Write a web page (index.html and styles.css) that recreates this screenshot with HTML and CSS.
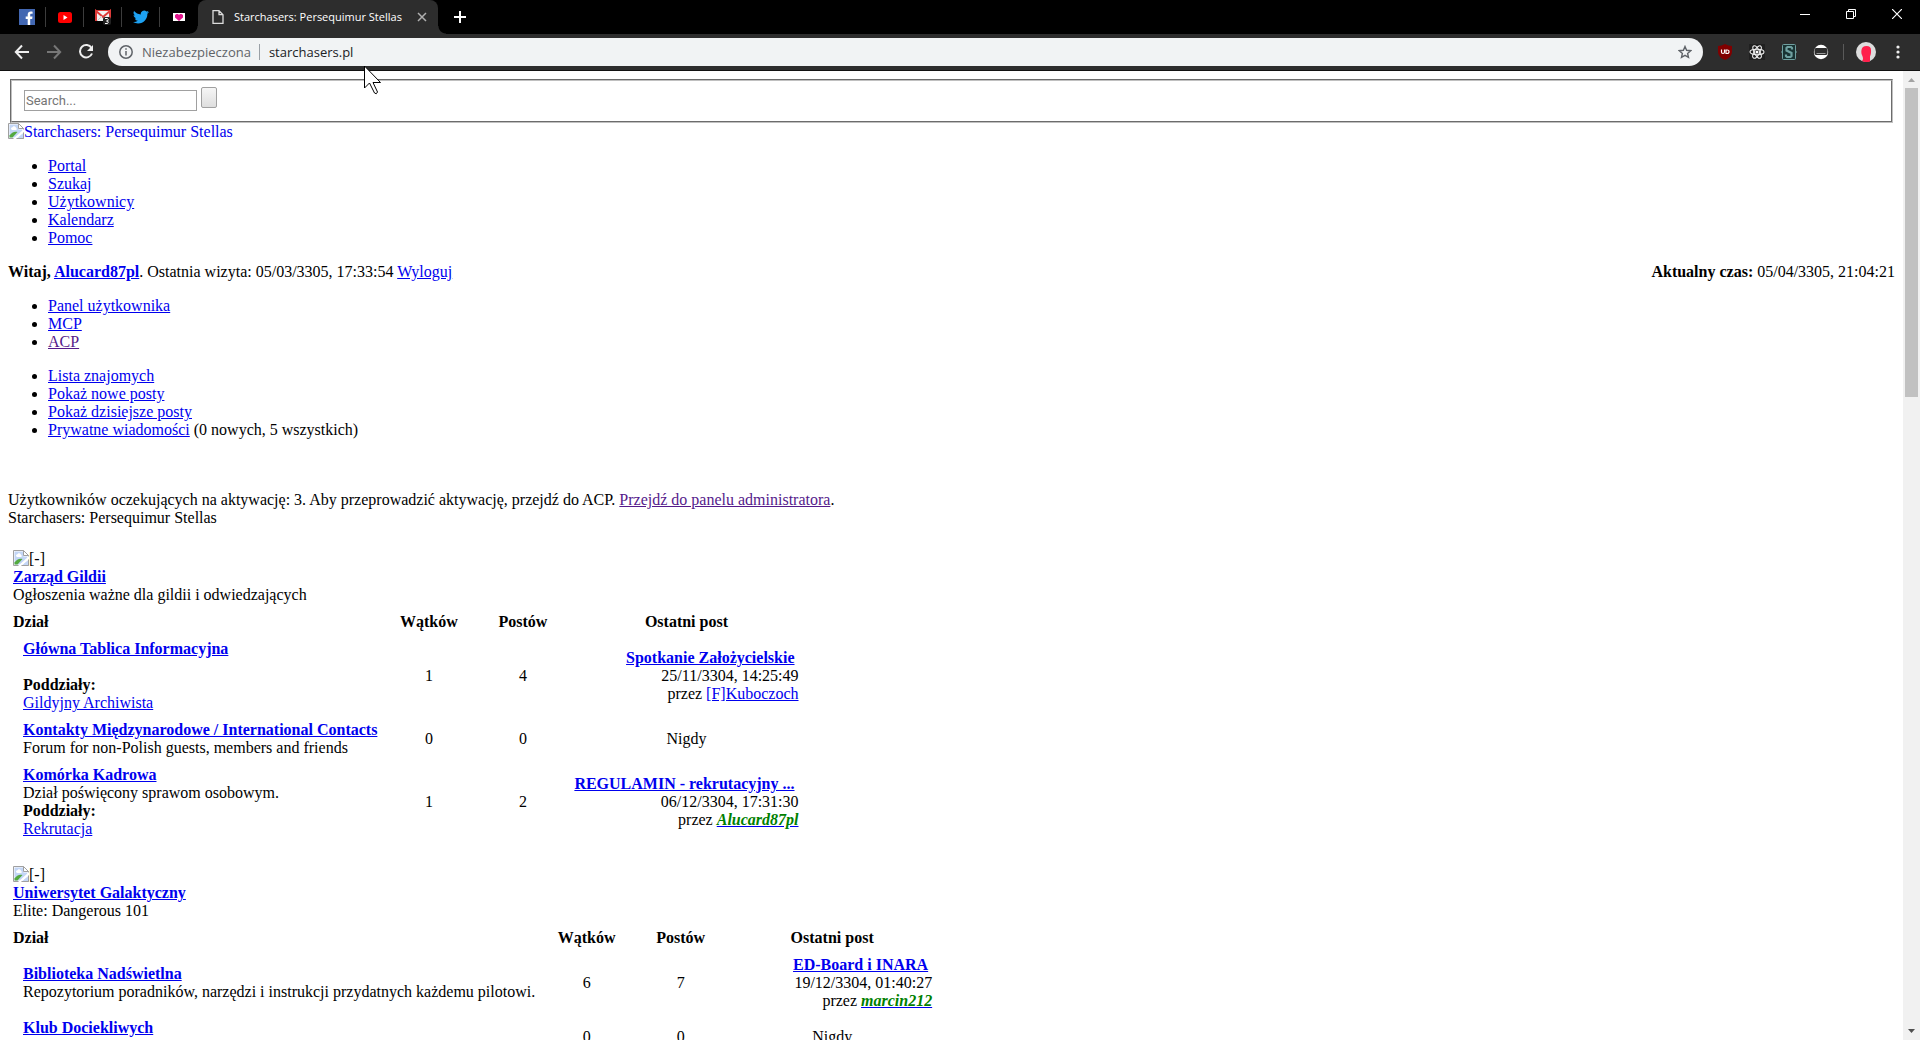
FILE: index.html
```html
<!DOCTYPE html>
<html lang="pl">
<head>
<meta charset="utf-8">
<title>Starchasers: Persequimur Stellas</title>
<link rel="stylesheet" href="styles.css">
</head>
<body>
<svg class="defs" aria-hidden="true">
  <symbol id="broken" viewBox="0 0 16 16">
    <path d="M0.500 0.500h10l5 5v10h-15z" fill="#fff" stroke="#a0a0a0"/>
    <path d="M1.500 1.500h9v5h4v8h-13z" fill="#c3d6f6"/>
    <path d="M3 6c0-2 2-1.500 2-2.500 2-1 3 .5 3 1.500 1 0 1 2 0 2H4z" fill="#fff"/>
    <path d="M1.500 14.500v-2c2-3 5-4.500 8-3.500l-5 5.500z" fill="#53a93f"/>
    <path d="M10.500 .5v5h5z" fill="#fff" stroke="#a0a0a0"/>
    <path d="M5 16 16 6v3.500L8.500 16z" fill="#fff"/>
    <path d="M9 15.500h6.500V10z" fill="#c3d6f6"/><path d="M8.500 15.500h7v-6" fill="none" stroke="#a0a0a0"/>
  </symbol>
</svg>

<header class="tabs">
  <div class="pin"><svg width="16" height="16" viewBox="0 0 16 16"><path fill="#4267b2" d="M0 0h16v16H0z"/><path fill="#fff" d="M8.700 16V10H6.700V7.500h2V5.800c0-2.100 1.300-3.200 3.100-3.200.9 0 1.600.1 1.800.1v2.100h-1.200c-1 0-1.200.5-1.200 1.200v1.500h2.300l-.3 2.500h-2v6z"/></svg></div>
  <div class="pin"><svg width="16" height="16" viewBox="0 0 16 16"><rect x="1" y="3" width="14" height="11" rx="2.500" fill="red"/><path fill="#fff" d="m6.500 6 4 2.500-4 2.500z"/></svg></div>
  <div class="pin"><svg width="16" height="16" viewBox="0 0 16 16"><path fill="#f2f2f2" d="M0 1h16v11H0z"/><path d="M1 12V2l7 6 7-6v10" fill="none" stroke="#dd3b39" stroke-width="2"/><path d="M1 1.500h14" stroke="#dd3b39"/><path d="m2 12 5-5" stroke="#ccc"/><rect x="8" y="8" width="8" height="8" rx="2" fill="#222"/><path d="M10 9.500h2.500q1.500 1.200 0 2.500H11.500h1q1.500 1.200 0 2.500H10" fill="none" stroke="#fff"/></svg></div>
  <div class="pin"><svg width="16" height="16" viewBox="0 0 24 24"><path fill="#1da1f2" d="M23.950 4.570a10 10 0 0 1-2.820.77 4.960 4.960 0 0 0 2.160-2.720c-.95.55-2 .95-3.130 1.180a4.920 4.920 0 0 0-8.380 4.480C7.690 8.100 4.070 6.130 1.640 3.160a4.920 4.920 0 0 0 1.520 6.570 4.900 4.900 0 0 1-2.230-.61v.06c0 2.380 1.700 4.370 3.950 4.830a5 5 0 0 1-2.210.08 4.940 4.940 0 0 0 4.600 3.420A9.870 9.870 0 0 1 0 19.540a13.990 13.990 0 0 0 7.550 2.210c9.050 0 14-7.500 14-13.980 0-.21 0-.42-.02-.63a9.940 9.940 0 0 0 2.420-2.570z"/></svg></div>
  <div class="pin pin-last"><svg width="12" height="8" viewBox="0 0 12 8"><path fill="#fff" d="M0 0h12v8H0z"/><path fill="#e0148c" d="M6 8 2 4.500V2L3.500 1H5l1 1 1-1h1.500L10 2v2.500z"/></svg></div>
  <div class="tab">
    <svg width="12" height="14" viewBox="0 0 12 14"><path d="M1 .7h6l4 4v8.600H1zM7 .7v4h4" fill="none" stroke="#ddd" stroke-width="1.300"/></svg>
    <span class="tab-title">Starchasers: Persequimur Stellas</span>
    <button class="icon" aria-label="Zamknij kartę"><svg width="10" height="10" viewBox="0 0 10 10"><path d="m1 1 8 8M9 1 1 9" stroke="#b0b0b0" stroke-width="1.500"/></svg></button>
  </div>
  <button class="icon new-tab" aria-label="Nowa karta"><svg width="12" height="12" viewBox="0 0 12 12"><path d="M6 0v12M0 6h12" stroke="#fff" stroke-width="2"/></svg></button>
  <div class="window-buttons">
    <button class="icon" aria-label="Minimalizuj"><svg width="10" height="10" viewBox="0 0 10 10"><path d="M0 5.500h10" stroke="#fff"/></svg></button>
    <button class="icon" aria-label="Przywróć"><svg width="10" height="10" viewBox="0 0 10 10"><path d="M.5 2.500h7v7h-7zM2.500 2V.5h7v7H8" fill="none" stroke="#fff"/></svg></button>
    <button class="icon" aria-label="Zamknij"><svg width="10" height="10" viewBox="0 0 10 10"><path d="m0 0 10 10M10 0 0 10" stroke="#fff" stroke-width="1.200"/></svg></button>
  </div>
</header>

<nav class="toolbar">
  <div class="nav-buttons">
    <button class="icon" aria-label="Wstecz"><svg width="16" height="16" viewBox="0 0 16 16"><path d="M15 8H2M8 1.500 1.800 8 8 14.500" fill="none" stroke="#eee" stroke-width="2"/></svg></button>
    <button class="icon" aria-label="Dalej"><svg width="16" height="16" viewBox="0 0 16 16"><path d="M1 8h13M8 1.500 14.200 8 8 14.500" fill="none" stroke="#777" stroke-width="2"/></svg></button>
    <button class="icon" aria-label="Odśwież"><svg width="16" height="16" viewBox="0 0 16 16"><path d="M13.500 4A6.200 6.200 0 1 0 14 9.500" fill="none" stroke="#eee" stroke-width="2"/><path d="M15 1v6H9z" fill="#eee"/></svg></button>
  </div>
  <div class="omnibox">
    <svg width="14" height="14" viewBox="0 0 14 14"><circle cx="7" cy="7" r="6.200" fill="none" stroke="#5f6368" stroke-width="1.500"/><path d="M7 6v4.500M7 3.300v1.500" stroke="#5f6368" stroke-width="1.500"/></svg>
    <span class="security">Niezabezpieczona</span>
    <input class="url" aria-label="Adres" value="starchasers.pl">
    <button class="icon" aria-label="Zakładka"><svg width="14" height="14" viewBox="0 0 14 14"><path d="m7 1.500 1.600 3.800 4.100.4-3.100 2.700.9 4L7 10.300l-3.500 2.100.9-4L1.300 5.700l4.100-.4z" fill="none" stroke="#5f6368" stroke-width="1.400"/></svg></button>
  </div>
  <div class="extensions">
    <button class="icon" aria-label="Blokada"><svg width="14" height="16" viewBox="0 0 14 16"><path d="M7 0q3.500 2 7 2v6q0 5-7 8-7-3-7-8V2q3.500 0 7-2z" fill="#800000"/><path d="M3.500 5.500v2.500q0 1.500 1.500 1.500t1.500-1.500V5.500M8 6v3.500h1q2 0 2-1.800T9 6z" fill="none" stroke="#fff" stroke-width="1.200"/></svg></button>
    <button class="icon" aria-label="React"><svg width="16" height="16" viewBox="0 0 16 16"><path fill="#202020" d="M0 0h16v16H0z"/><g fill="none" stroke="#eee" stroke-width="1.100"><ellipse cx="8" cy="8" rx="7" ry="2.700"/><ellipse cx="8" cy="8" rx="7" ry="2.700" transform="rotate(60 8 8)"/><ellipse cx="8" cy="8" rx="7" ry="2.700" transform="rotate(120 8 8)"/></g><circle cx="8" cy="8" r="1.500" fill="#fff"/></svg></button>
    <button class="icon" aria-label="Stylus"><svg width="16" height="16" viewBox="0 0 16 16"><rect x="1.500" y=".5" width="13" height="15" rx="1" fill="#193333" stroke="#6fa0a0"/><path d="M0 8h2M14 8h2" stroke="#6fa0a0"/><path d="M11 5.500V4L10 3H6.500l-1 1v2.500L10.500 9v3l-1 1H6l-1-1v-1.500" fill="none" stroke="#6fa0a0" stroke-width="2.200"/></svg></button>
    <button class="icon" aria-label="Rozszerzenie"><svg width="16" height="16" viewBox="0 0 16 16"><circle cx="8" cy="8" r="7.200" fill="#fff"/><path d="M3 4h10q1.500 0 1.500 2v3q0 2-1.500 2H3q-1.500 0-1.500-2V6Q1.500 4 3 4z" fill="#2d2d2d"/><path d="M3.500 9.500h9" stroke="#999"/></svg></button>
    <span class="divider"></span>
    <button class="icon" aria-label="Profil"><svg width="20" height="20" viewBox="0 0 20 20"><circle cx="10" cy="10" r="10" fill="#ddd"/><path d="M6 19q2-2 0-6-1-2-.5-5 .5-4 5-4T15 8q.3 4-1 6.500v5Q10 21 6 19z" fill="#ff1f4b"/></svg></button>
    <button class="icon" aria-label="Menu"><svg width="4" height="14" viewBox="0 0 4 14"><g fill="#eee"><circle cx="2" cy="2" r="1.600"/><circle cx="2" cy="7" r="1.600"/><circle cx="2" cy="12" r="1.600"/></g></svg></button>
  </div>
</nav>

<div class="viewport">
<main class="page">
  <form class="search-form">
    <fieldset class="search">
      <input class="search-text" type="text" placeholder="Search..." aria-label="Search">
      <button class="search-go" type="button" aria-label="Szukaj"></button>
    </fieldset>
  </form>
  <a class="logo" href="#"><svg class="broken"><use href="#broken"/></svg>Starchasers: Persequimur Stellas</a>
  <ul>
    <li><a href="#">Portal</a></li>
    <li><a href="#">Szukaj</a></li>
    <li><a href="#">Użytkownicy</a></li>
    <li><a href="#">Kalendarz</a></li>
    <li><a href="#">Pomoc</a></li>
  </ul>
  <div class="welcome">
    <span><strong>Witaj, <a href="#">Alucard87pl</a></strong>. Ostatnia wizyta: 05/03/3305, 17:33:54 <a href="#">Wyloguj</a></span>
    <span><strong>Aktualny czas:</strong> 05/04/3305, 21:04:21</span>
  </div>
  <ul>
    <li><a href="#">Panel użytkownika</a></li>
    <li><a href="#">MCP</a></li>
    <li><a class="visited" href="#">ACP</a></li>
  </ul>
  <ul>
    <li><a href="#">Lista znajomych</a></li>
    <li><a href="#">Pokaż nowe posty</a></li>
    <li><a href="#">Pokaż dzisiejsze posty</a></li>
    <li><a href="#">Prywatne wiadomości</a> (0 nowych, 5 wszystkich)</li>
  </ul>
  <div class="notice">Użytkowników oczekujących na aktywację: 3. Aby przeprowadzić aktywację, przejdź do ACP. <a class="visited" href="#">Przejdź do panelu administratora</a>.</div>
  <div>Starchasers: Persequimur Stellas</div>

  <table class="forum">
    <thead>
      <tr><td colspan="5">
        <div class="toggle"><svg class="broken"><use href="#broken"/></svg>[-]</div>
        <div><strong><a href="#">Zarząd Gildii</a></strong></div>
        <div>Ogłoszenia ważne dla gildii i odwiedzających</div>
      </td></tr>
      <tr><th class="name" colspan="2">Dział</th><th class="count">Wątków</th><th class="count">Postów</th><th class="last">Ostatni post</th></tr>
    </thead>
    <tbody>
      <tr>
        <td class="status"></td>
        <td><strong><a href="#">Główna Tablica Informacyjna</a></strong><br><br><strong>Poddziały:</strong><br><a href="#">Gildyjny Archiwista</a></td>
        <td class="num">1</td><td class="num">4</td>
        <td class="post"><strong><a href="#">Spotkanie Założycielskie</a></strong>&nbsp;<br>25/11/3304, 14:25:49<br>przez <a href="#">[F]Kuboczoch</a></td>
      </tr>
      <tr>
        <td class="status"></td>
        <td><strong><a href="#">Kontakty Międzynarodowe / International Contacts</a></strong><br>Forum for non-Polish guests, members and friends</td>
        <td class="num">0</td><td class="num">0</td><td class="num">Nigdy</td>
      </tr>
      <tr>
        <td class="status"></td>
        <td><strong><a href="#">Komórka Kadrowa</a></strong><br>Dział poświęcony sprawom osobowym.<br><strong>Poddziały:</strong><br><a href="#">Rekrutacja</a></td>
        <td class="num">1</td><td class="num">2</td>
        <td class="post"><strong><a href="#">REGULAMIN - rekrutacyjny ...</a></strong>&nbsp;<br>06/12/3304, 17:31:30<br>przez <a href="#"><span class="staff">Alucard87pl</span></a></td>
      </tr>
    </tbody>
  </table>

  <table class="forum">
    <thead>
      <tr><td colspan="5">
        <div class="toggle"><svg class="broken"><use href="#broken"/></svg>[-]</div>
        <div><strong><a href="#">Uniwersytet Galaktyczny</a></strong></div>
        <div>Elite: Dangerous 101</div>
      </td></tr>
      <tr><th class="name" colspan="2">Dział</th><th class="count">Wątków</th><th class="count">Postów</th><th class="last">Ostatni post</th></tr>
    </thead>
    <tbody>
      <tr>
        <td class="status"></td>
        <td><strong><a href="#">Biblioteka Nadświetlna</a></strong><br>Repozytorium poradników, narzędzi i instrukcji przydatnych każdemu pilotowi.</td>
        <td class="num">6</td><td class="num">7</td>
        <td class="post"><strong><a href="#">ED-Board i INARA</a></strong>&nbsp;<br>19/12/3304, 01:40:27<br>przez <a href="#"><span class="staff">marcin212</span></a></td>
      </tr>
      <tr>
        <td class="status"></td>
        <td><strong><a href="#">Klub Dociekliwych</a></strong><br>&nbsp;</td>
        <td class="num">0</td><td class="num">0</td><td class="num">Nigdy</td>
      </tr>
    </tbody>
  </table>
</main>
<div class="scrollbar" aria-hidden="true">
  <svg width="7" height="4" viewBox="0 0 7 4"><path d="M0 4 3.500 0 7 4z" fill="#a3a3a3"/></svg>
  <div class="track"><div class="thumb"></div></div>
  <svg width="7" height="4" viewBox="0 0 7 4"><path d="M0 0h7L3.500 4z" fill="#505050"/></svg>
</div>
</div>

<svg class="cursor" width="20" height="32" viewBox="0 0 20 32" aria-hidden="true"><path d="M1.500 1v22l5-5 5 10q2 2 3-1L10 17.500h7.500z" fill="#fff" stroke="#000"/></svg>
</body>
</html>
```
FILE: styles.css
```css
* { box-sizing: border-box; }

body {
  margin: 0;
  height: 100vh;
  display: flex;
  flex-direction: column;
  overflow: hidden;
  background: #fff;
  color: #000;
  font: 16px/18px "Liberation Serif", "Times New Roman", serif;
}

.defs { position: absolute; width: 0; height: 0; }
svg { display: block; flex: none; }

.icon {
  display: flex;
  align-items: center;
  justify-content: center;
  flex: none;
  padding: 0;
  border: 0;
  background: none;
}

/* Tab strip */
.tabs {
  display: flex;
  flex: none;
  height: 34px;
  padding-left: 8px;
  background: #000;
  font: 11px/16px "Open Sans", "Noto Sans", sans-serif;
}
.pin {
  display: flex;
  align-items: center;
  justify-content: center;
  width: 38px;
  background: linear-gradient(#3c3c3c, #3c3c3c) right center / 1px 20px no-repeat;
}
/* Curved feet on both sides of the active tab */
.pin-last { background: radial-gradient(circle at 0 0, #000 7px, #2d2d2d 8px) right bottom / 8px 8px no-repeat; }
.new-tab { background: radial-gradient(circle at 8px 0, #000 7px, #2d2d2d 8px) left bottom / 8px 8px no-repeat; }
.tab {
  display: flex;
  align-items: center;
  width: 240px;
  padding: 0 11px 0 14px;
  border-radius: 8px 8px 0 0;
  background: #2d2d2d;
  color: #fff;
}
.tab-title { flex: 1; margin-left: 10px; white-space: nowrap; }
.new-tab { width: 44px; }
.window-buttons { display: flex; height: 28px; margin-left: auto; }
.window-buttons .icon { width: 46px; }

/* Toolbar */
.toolbar {
  display: flex;
  align-items: center;
  flex: none;
  height: 37px;
  border-bottom: 1px solid #111;
  background: #2d2d2d;
  font: 13px/20px "Open Sans", "Noto Sans", sans-serif;
}
.nav-buttons { display: flex; padding: 0 6px; }
.nav-buttons .icon { width: 32px; height: 28px; }
.omnibox {
  display: flex;
  align-items: center;
  flex: 1;
  height: 28px;
  padding: 0 11px;
  border-radius: 14px;
  background: #f1f3f4;
}
.security {
  margin: 0 9px;
  padding-right: 8px;
  border-right: 1px solid #9aa0a6;
  color: #5f6368;
  line-height: 16px;
}
.url {
  flex: 1;
  min-width: 0;
  padding: 0;
  border: 0;
  background: none;
  color: #202124;
  font: inherit;
}
.extensions { display: flex; align-items: center; padding: 0 6px; }
.extensions .icon { width: 32px; height: 28px; }
.divider { width: 1px; height: 16px; margin: 0 6px; background: #5a5a5a; }

/* Page area */
.viewport { display: flex; flex: 1; min-height: 0; }
.page { flex: 1; min-width: 0; padding: 8px; overflow: hidden; }

a { color: #0000ee; text-decoration: underline; }
a.visited { color: #551a8b; }
ul { margin: 16px 0; padding-left: 40px; }

.search-form { margin: 0; }
.search {
  display: flex;
  height: 44px;
  margin: 0 2px;
  padding: 6px 12px 10px;
  gap: 4px;
  border: 2px groove #c0c0c0;
}
.search-text {
  align-self: flex-end;
  width: 173px;
  height: 21px;
  padding: 1px;
  border: 1px solid #a0a0a0;
  background: #fff;
  font: 13px/16px Roboto, Arial, sans-serif;
}
.search-text::placeholder { color: #757575; }
.search-go {
  width: 16px;
  height: 21px;
  padding: 0;
  border: 1px solid #a0a0a0;
  border-radius: 2px;
  background: linear-gradient(#f6f6f6, #dedede);
}

.broken { width: 16px; height: 16px; }
.logo { display: flex; width: max-content; text-decoration: none; }
.toggle { display: flex; }
.welcome { display: flex; justify-content: space-between; }
.notice { margin-top: 52px; }

.forum {
  margin-top: 18px;
  border-spacing: 1px;
}
.forum th, .forum td { padding: 4px; }
.forum .name { text-align: left; }
.status { width: 9px; }
.count { width: 93px; }
.last { min-width: 208px; }
.num { text-align: center; }
.post { text-align: right; white-space: nowrap; }
.staff { color: #008000; font-weight: bold; font-style: italic; }

.scrollbar {
  display: flex;
  flex-direction: column;
  align-items: center;
  flex: none;
  width: 17px;
  padding: 7px 0;
  background: #f1f1f1;
}
.track { flex: 1; width: 13px; padding: 6px 0; }
.thumb { height: 33%; background: #c1c1c1; }

.cursor { position: absolute; left: 363px; top: 65px; }
```
